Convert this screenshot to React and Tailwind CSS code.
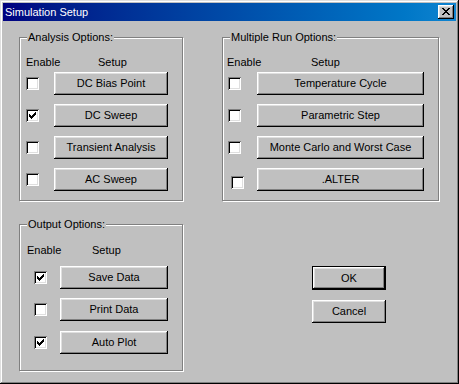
const raised =
  'shadow-[inset_-1px_-1px_0_#000,inset_1px_1px_0_#fff,inset_-2px_-2px_0_#808080,inset_2px_2px_0_#dfdfdf]';

const CheckMark = () => (
  <svg width="7" height="7" viewBox="0 0 7 7" shapeRendering="crispEdges" className="block">
    <path d="M6 0h1v1H6zM5 1h2v1H5zM0 2h1v1H0zM4 2h3v1H4zM0 3h2v1H0zM3 3h3v1H3zM0 4h5v1H0zM1 5h3v1H1zM2 6h1v1H2z" fill="#000" />
  </svg>
);

const Check = ({ checked, className = '' }) => (
  <div
    className={`w-[13px] h-[13px] shrink-0 bg-white flex items-center justify-center shadow-[inset_1px_1px_0_#808080,inset_-1px_-1px_0_#fff,inset_2px_2px_0_#000,inset_-2px_-2px_0_#dfdfdf] ${className}`}
  >
    {checked && <CheckMark />}
  </div>
);

const Btn = ({ children, className = '' }) => (
  <button className={`h-[23px] flex items-center justify-center bg-[#c0c0c0] text-black ${raised} ${className}`}>
    {children}
  </button>
);

const Group = ({ label, className = '', children }) => (
  <div className={`relative border border-[#808080] shadow-[inset_1px_1px_0_#fff,1px_1px_0_#fff] ${className}`}>
    <span className="absolute -top-[8px] left-[7px] px-[1px] bg-[#c0c0c0] leading-[14px]">{label}</span>
    {children}
  </div>
);

const Row = ({ checked, btn, cbClass, btnClass, className = '' }) => (
  <div className={`flex items-center ${className}`}>
    <Check checked={checked} className={cbClass} />
    <Btn className={btnClass}>{btn}</Btn>
  </div>
);

export default function App() {
  const analysis = [
    ['DC Bias Point', false],
    ['DC Sweep', true],
    ['Transient Analysis', false],
    ['AC Sweep', false],
  ];
  const multi = ['Temperature Cycle', 'Parametric Step', 'Monte Carlo and Worst Case', '.ALTER'];

  return (
    <div
      className="w-[459px] h-[384px] bg-[#c0c0c0] p-[3px] text-[11px] text-black shadow-[inset_-1px_-1px_0_#000,inset_1px_1px_0_#dfdfdf,inset_-2px_-2px_0_#808080,inset_2px_2px_0_#fff]"
      style={{ fontFamily: '"Liberation Sans", Arial, sans-serif' }}
    >
      {/* title bar */}
      <div className="h-[18px] flex items-center justify-between bg-gradient-to-r from-[#000080] to-[#1084d0] pl-[2px] pr-[2px]">
        <span className="text-white text-[11px] leading-none">Simulation Setup</span>
        <button className={`w-[16px] h-[14px] flex items-center justify-center bg-[#c0c0c0] ${raised}`}>
          <svg width="8" height="7" viewBox="0 0 8 7" shapeRendering="crispEdges" className="block -mt-px">
            <path d="M0 0h2v1H0zM6 0h2v1H6zM1 1h2v1H1zM5 1h2v1H5zM2 2h4v1H2zM3 3h2v1H3zM2 4h4v1H2zM1 5h2v1H1zM5 5h2v1H5zM0 6h2v1H0zM6 6h2v1H6z" fill="#000" />
          </svg>
        </button>
      </div>

      <div className="pt-[16px] pl-[16px]">
        <div className="flex">
          <Group label="Analysis Options:" className="w-[164px] h-[164px] pt-[17px] pl-[6px]">
            <div className="flex h-[14px] leading-[14px]">
              <span className="w-[72px]">Enable</span>
              <span>Setup</span>
            </div>
            <div className="mt-[3px] flex flex-col gap-[9px]">
              {analysis.map(([t, c]) => (
                <Row key={t} checked={c} btn={t} btnClass="ml-[15px] w-[114px]" />
              ))}
            </div>
          </Group>

          <Group label="Multiple Run Options:" className="ml-[39px] w-[217px] h-[164px] pt-[17px] pl-[4px]">
            <div className="flex h-[14px] leading-[14px]">
              <span className="w-[84px]">Enable</span>
              <span>Setup</span>
            </div>
            <div className="mt-[3px] flex flex-col gap-[9px]">
              {multi.map((t, i) => (
                <Row
                  key={t}
                  checked={false}
                  btn={t}
                  cbClass={i === 3 ? 'ml-[4px] mt-[5px]' : 'ml-[1px]'}
                  btnClass={i === 3 ? 'ml-[13px] w-[167px]' : 'ml-[16px] w-[167px]'}
                />
              ))}
            </div>
          </Group>
        </div>

        <div className="flex mt-[23px]">
          <Group label="Output Options:" className="w-[164px] h-[147px] pt-[18px] pl-[7px]">
            <div className="flex h-[14px] leading-[14px]">
              <span className="w-[65px]">Enable</span>
              <span>Setup</span>
            </div>
            <Row checked btn="Save Data" cbClass="ml-[7px]" btnClass="ml-[13px] w-[108px]" className="mt-[9px]" />
            <Row checked={false} btn="Print Data" cbClass="ml-[7px]" btnClass="ml-[13px] w-[108px]" className="mt-[9px]" />
            <Row checked btn="Auto Plot" cbClass="ml-[7px]" btnClass="ml-[13px] w-[108px]" className="mt-[10px]" />
          </Group>

          <div className="ml-[129px] pt-[42px] flex flex-col">
            <button className="w-[74px] h-[24px] border border-black bg-[#c0c0c0] flex items-center justify-center shadow-[inset_-1px_-1px_0_#000,inset_1px_1px_0_#fff,inset_-2px_-2px_0_#808080,inset_2px_2px_0_#dfdfdf]">
              OK
            </button>
            <Btn className="mt-[10px] w-[74px]">Cancel</Btn>
          </div>
        </div>
      </div>
    </div>
  );
}
